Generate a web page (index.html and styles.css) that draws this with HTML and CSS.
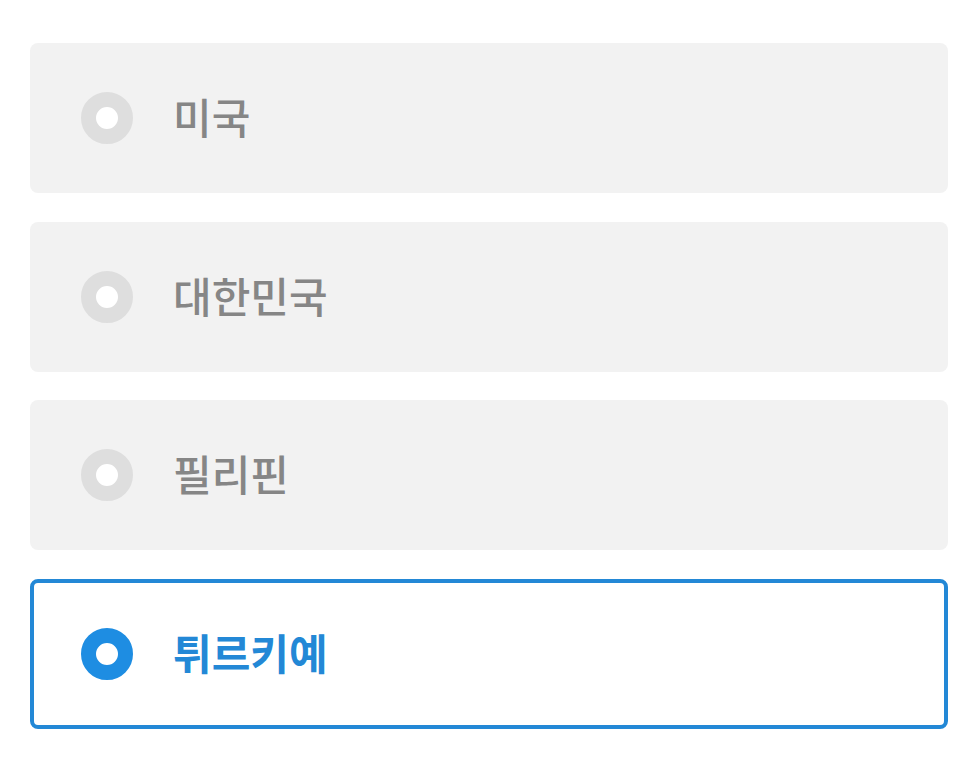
FILE: index.html
```html
<!DOCTYPE html>
<html lang="ko">
<head>
    <meta charset="UTF-8">
    <meta name="viewport" content="width=device-width, initial-scale=1.0">
    <title>국가 선택</title>
    <link rel="stylesheet" href="styles.css">
</head>
<body>
    <div class="options">
        <label class="option">
            <span class="radio"></span>
            <span class="option-text">미국</span>
        </label>
        <label class="option">
            <span class="radio"></span>
            <span class="option-text">대한민국</span>
        </label>
        <label class="option">
            <span class="radio"></span>
            <span class="option-text">필리핀</span>
        </label>
        <label class="option selected">
            <span class="radio"></span>
            <span class="option-text">튀르키예</span>
        </label>
    </div>
</body>
</html>
```

FILE: styles.css
```css
body {
    margin: 0;
    padding: 0;
    background-color: #fff;
    font-family: "Noto Sans CJK KR", "Noto Sans", sans-serif;
}
.options {
    display: flex;
    flex-direction: column;
    gap: 28.5px;
    padding: 43px 31px 0 30px;
}
.option {
    display: flex;
    align-items: center;
    height: 150px;
    box-sizing: border-box;
    padding-left: 51px;
    background-color: #f2f2f2;
    border-radius: 8px;
    cursor: pointer;
}
.radio {
    width: 52px;
    height: 52px;
    box-sizing: border-box;
    border-radius: 50%;
    border: 15px solid #dedede;
    background-color: #fff;
    flex-shrink: 0;
}
.option-text {
    margin-left: 40px;
    font-size: 42px;
    font-weight: 500;
    color: #868686;
    line-height: 1;
    margin-top: -4px;
}
.option.selected {
    background-color: #fff;
    border: 4px solid #2388d6;
    padding-left: 47px;
}
.option.selected .radio {
    border-color: #1e8de2;
}
.option.selected .option-text {
    color: #2388d6;
    font-weight: 700;
}
```
